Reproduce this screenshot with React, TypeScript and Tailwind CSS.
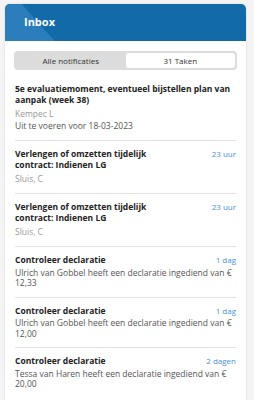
import React from "react";

type Item = {
  title: string;
  time?: string;
  sub?: string;
  desc?: string;
  extra?: string;
};

const items: Item[] = [
  {
    title: "5e evaluatiemoment, eventueel bijstellen plan van aanpak (week 38)",
    sub: "Kempec L",
    extra: "Uit te voeren voor 18-03-2023",
  },
  { title: "Verlengen of omzetten tijdelijk contract: Indienen LG", time: "23 uur", sub: "Sluis, C" },
  { title: "Verlengen of omzetten tijdelijk contract: Indienen LG", time: "23 uur", sub: "Sluis, C" },
  { title: "Controleer declaratie", time: "1 dag", desc: "Ulrich van Gobbel heeft een declaratie ingediend van € 12,33" },
  { title: "Controleer declaratie", time: "1 dag", desc: "Ulrich van Gobbel heeft een declaratie ingediend van € 12,00" },
  { title: "Controleer declaratie", time: "2 dagen", desc: "Tessa van Haren heeft een declaratie ingediend van € 20,00" },
];

export default function App() {
  return (
    <div
      className="w-[254px] h-[400px] overflow-hidden bg-[#f4f4f4] pt-[4px] pl-[5px] pr-[8px]"
      style={{ fontFamily: '"Open Sans", "Noto Sans", sans-serif' }}
    >
      <div className="bg-white rounded-t-[5px] shadow-[0_0_2px_rgba(0,0,0,0.15)] min-h-[420px]">
        <div className="relative h-[37px] rounded-t-[5px] bg-[#136aa9] overflow-hidden flex items-center px-[19px]">
          <svg className="absolute left-0 top-0" width="60" height="37" viewBox="0 0 60 37">
            <path d="M0 0 L17 0 Q28 14 50 37 L0 37 Z" fill="#2b7dbb" />
          </svg>
          <span className="relative text-white font-bold text-[11px]">Inbox</span>
        </div>
        <div className="px-[9px] pt-[10px]">
          <div className="flex h-[19px] rounded-[4px] bg-[#dcdcdc] p-[2px] text-[8px] text-[#333]">
            <div className="flex-1 flex items-center justify-center">Alle notificaties</div>
            <div className="flex-1 flex items-center justify-center bg-white rounded-[3px]">31 Taken</div>
          </div>
        </div>
        <div className="px-[10px] pt-[6px]">
          {items.map((it, i) => (
            <div key={i} className={`py-[8px] ${i > 0 ? "border-t border-[#e2e2e2]" : ""}`}>
              <div className="flex justify-between gap-[8px]">
                <div className={`font-bold text-[8.5px] leading-[10.5px] text-[#222] ${it.time && it.sub ? "w-[140px]" : ""}`}>
                  {it.title}
                </div>
                {it.time && <div className="text-[8px] leading-[10.5px] text-[#4a8fd6] whitespace-nowrap">{it.time}</div>}
              </div>
              {it.sub && <div className="mt-[3px] text-[8.5px] leading-[12px] text-[#9a9a9a]">{it.sub}</div>}
              {it.extra && <div className="text-[8.5px] leading-[12px] text-[#555]">{it.extra}</div>}
              {it.desc && <div className="mt-[2px] text-[8.5px] leading-[10.5px] text-[#555]">{it.desc}</div>}
            </div>
          ))}
        </div>
      </div>
    </div>
  );
}
